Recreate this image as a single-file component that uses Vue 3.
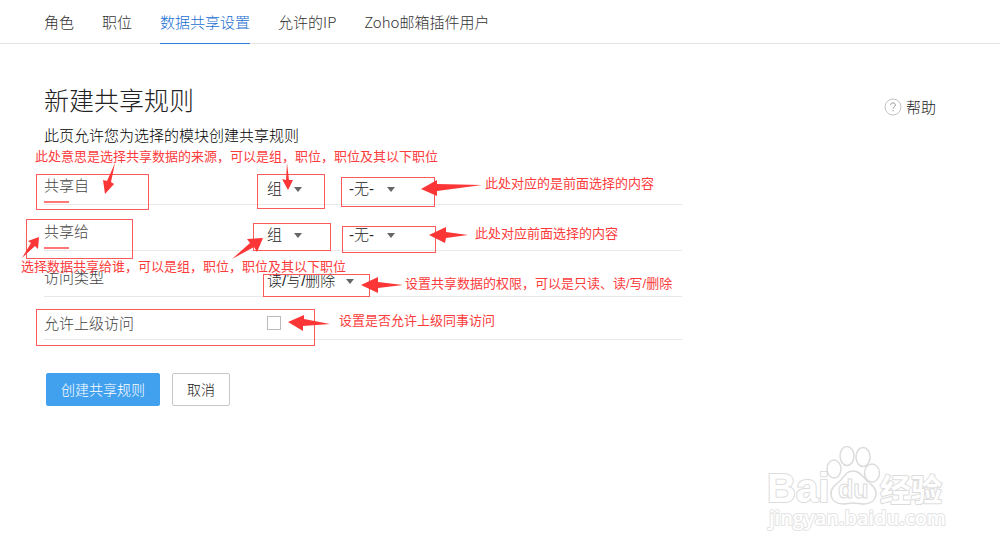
<script setup>
import { ref } from 'vue'

const tabs = ['角色', '职位', '数据共享设置', '允许的IP', 'Zoho邮箱插件用户']
const active = ref(2)
const shareRows = [
  { id: 'from', label: '共享自' },
  { id: 'to', label: '共享给' }
]
const allowSuperior = ref(false)

const boxes = [
  [36, 174, 112, 35], [26, 219, 106, 39], [257, 174, 67, 34], [253, 223, 77, 27],
  [341, 177, 93, 29], [342, 226, 93, 26], [263, 274, 106, 22], [36, 309, 278, 36]
]
const arrows = [
  '115,163 111,182 114,184 105,194 103,180 107,181',
  '22,258 31,243 28,241 39,237 38,249 35,246',
  '287,163 289,180 293,180 288,190 282,179 286,180',
  '232,259 250,243 247,239 263,238 257,252 254,247',
  '421,189 437,180 437,184 482,185 437,191 437,196',
  '429,235 446,227 446,232 468,235 446,238 445,243',
  '361,285 378,277 378,282 403,285 378,288 378,293',
  '288,322 304,315 304,319 330,324 303,326 303,331'
]
</script>

<template>
  <div class="page">
    <nav class="tabs">
      <a v-for="(t, i) in tabs" :key="t" href="#" :class="{ active: i === active }" @click.prevent="active = i">{{ t }}</a>
    </nav>

    <main class="content">
      <a class="help" href="#">
        <svg width="18" height="18" viewBox="0 0 18 18" fill="none" aria-hidden="true">
          <circle cx="9" cy="9" r="8" stroke="#c4c4c4" />
          <path d="M6.6 7.2C6.6 5.7 7.7 4.9 9 4.9s2.4.8 2.4 2.1c0 1.7-2.3 1.8-2.3 3.7M9.1 12v1.3" stroke="#999" />
        </svg>
        <span>帮助</span>
      </a>
      <h1>新建共享规则</h1>
      <p class="intro">此页允许您为选择的模块创建共享规则</p>

      <form class="form" @submit.prevent>
        <div v-for="r in shareRows" :key="r.id" class="row">
          <label class="required" :for="r.id">{{ r.label }}</label>
          <div class="controls">
            <span class="pick group">
              <select :id="r.id"><option>组</option><option>职位</option></select>
              <svg width="8" height="5" viewBox="0 0 8 5" aria-hidden="true"><path d="M0 0h8L4 5z" /></svg>
            </span>
            <span class="pick none">
              <select :aria-label="r.label + '对象'"><option>-无-</option></select>
              <svg width="8" height="5" viewBox="0 0 8 5" aria-hidden="true"><path d="M0 0h8L4 5z" /></svg>
            </span>
          </div>
        </div>
        <div class="row">
          <label for="access">访问类型</label>
          <div class="controls">
            <span class="pick access">
              <select id="access"><option>读/写/删除</option><option>只读</option></select>
              <svg width="8" height="5" viewBox="0 0 8 5" aria-hidden="true"><path d="M0 0h8L4 5z" /></svg>
            </span>
          </div>
        </div>
        <div class="row last">
          <label for="superior">允许上级访问</label>
          <div class="controls"><input id="superior" v-model="allowSuperior" type="checkbox"></div>
        </div>
        <div class="actions">
          <button class="primary" type="submit">创建共享规则</button>
          <button type="button">取消</button>
        </div>
      </form>
    </main>

    <div class="notes">
      <svg width="700" height="360" viewBox="0 0 700 360" aria-hidden="true">
        <g fill="none" stroke="#fb5a5a">
          <rect v-for="(b, i) in boxes" :key="i" :x="b[0] + 0.5" :y="b[1] + 0.5" :width="b[2]" :height="b[3]" />
        </g>
        <g fill="#fc3636"><polygon v-for="a in arrows" :key="a" :points="a" /></g>
      </svg>
      <p class="note n1">此处意思是选择共享数据的来源，可以是组，职位，职位及其以下职位</p>
      <p class="note n2">此处对应的是前面选择的内容</p>
      <p class="note n3">此处对应前面选择的内容</p>
      <p class="note n4">选择数据共享给谁，可以是组，职位，职位及其以下职位</p>
      <p class="note n5">设置共享数据的权限，可以是只读、读/写/删除</p>
      <p class="note n6">设置是否允许上级同事访问</p>
    </div>

    <svg class="mark" width="184" height="92" viewBox="0 0 184 92" fill="#fff" stroke="#dcdcdc">
      <g stroke-width="2" paint-order="stroke" stroke-linejoin="round">
        <text x="4" y="60" font-size="40" font-weight="700">Bai</text>
        <text x="117" y="59" class="cjk" font-size="31" font-weight="700">经验</text>
        <text x="6" y="83" font-size="20" class="url" stroke="#e4e4e4">jingyan.baidu.com</text>
      </g>
      <g stroke-width="1.5">
        <ellipse cx="71" cy="27" rx="7" ry="9" />
        <ellipse cx="84" cy="14" rx="7" ry="9.5" />
        <ellipse cx="100" cy="15" rx="7" ry="9.5" />
        <ellipse cx="109" cy="31" rx="7.5" ry="9" />
        <path d="M90 29c-7 0-9 6-13 10-5 4-10 8-9 14 1 6 6 9 12 9 4 0 6-1 10-1s7 1 11 1c6 0 11-3 12-9 1-6-4-10-9-14-4-4-7-10-14-10z" />
        <text x="75" y="56" font-size="25" font-weight="700" stroke-width="1">du</text>
      </g>
    </svg>
  </div>
</template>

<style>
body { margin: 0; background: #fff; }
</style>

<style scoped>
.page {
  position: relative;
  min-height: 100vh;
  font-family: "Noto Sans CJK SC", sans-serif;
  font-size: 15px;
  font-weight: 300;
  line-height: 22px;
  color: #444;
}
.tabs {
  display: flex;
  gap: 28px;
  height: 43px;
  padding-left: 44px;
  border-bottom: 1px solid #e4e4e4;
}
.tabs a {
  box-sizing: border-box;
  height: 44px;
  padding-top: 11px;
  color: #333;
  text-decoration: none;
  white-space: nowrap;
}
.tabs a.active { color: #1a6fd0; border-bottom: 1px solid #2f7ed8; }
.content { position: relative; padding: 37px 44px 0; }
h1 {
  margin: 0;
  font-size: 25px;
  line-height: 36px;
  font-weight: 300;
  color: #222;
}
.intro { margin: 7px 0 0; color: #000; }
.help {
  position: absolute;
  top: 52px;
  right: 64px;
  display: flex;
  align-items: center;
  gap: 4px;
  color: #222;
  text-decoration: none;
}
.form { max-width: 638px; margin-top: 13px; }
.row {
  display: grid;
  grid-template-columns: 223px 1fr;
  box-sizing: border-box;
  height: 46px;
  border-bottom: 1px solid #e8e8e8;
}
.row.last { height: 43px; }
.row label { align-self: start; justify-self: start; padding-top: 15px; }
.required::after {
  content: "";
  display: block;
  width: 25px;
  height: 2px;
  margin-top: 5px;
  background: #f77;
}
.controls { display: flex; align-items: flex-start; gap: 47px; padding-top: 19px; color: #222; }
.pick { display: flex; align-items: center; position: relative; }
.pick select {
  width: 100%;
  height: 22px;
  padding: 0;
  border: 0;
  appearance: none;
  background: transparent;
  font: inherit;
  font-family: "Liberation Sans", "Noto Sans CJK SC", sans-serif;
  color: inherit;
}
.pick svg { position: absolute; right: 0; fill: #666; pointer-events: none; }
.group { width: 35px; }
.none { width: 46px; }
.access { width: 87px; }
.controls input {
  appearance: none;
  width: 14px;
  height: 14px;
  margin: 0;
  border: 1px solid #bbb;
  background: #fff;
}
.controls input:checked { background: #41a1ee; }
.actions { display: flex; gap: 12px; padding: 33px 2px 0; }
.actions button {
  box-sizing: border-box;
  height: 33px;
  padding: 0 14px 2px;
  border: 1px solid #c8c8c8;
  border-radius: 2px;
  background: #fff;
  color: #222;
  font: inherit;
  font-size: 14px;
}
.actions .primary { border-color: #41a1ee; background: #41a1ee; color: #fff; }
.notes { position: absolute; top: 0; left: 0; pointer-events: none; }
.notes svg { display: block; }
.note {
  position: absolute;
  margin: 0;
  font-family: "Liberation Sans", "Noto Sans CJK SC", sans-serif;
  font-size: 13px;
  font-weight: 400;
  line-height: 20px;
  color: #fc3c3c;
  white-space: nowrap;
}
.n1 { left: 35px; top: 147px; }
.n2 { left: 485px; top: 174px; }
.n3 { left: 475px; top: 224px; }
.n4 { left: 21px; top: 257px; }
.n5 { left: 405px; top: 274px; }
.n6 { left: 339px; top: 311px; }
.mark { position: absolute; right: 53px; bottom: 19px; font-family: "Liberation Sans", Arial, sans-serif; }
.mark .cjk { font-family: "Noto Sans CJK SC", sans-serif; }
.mark .url { font-family: "Open Sans", sans-serif; font-weight: 600; }
</style>
